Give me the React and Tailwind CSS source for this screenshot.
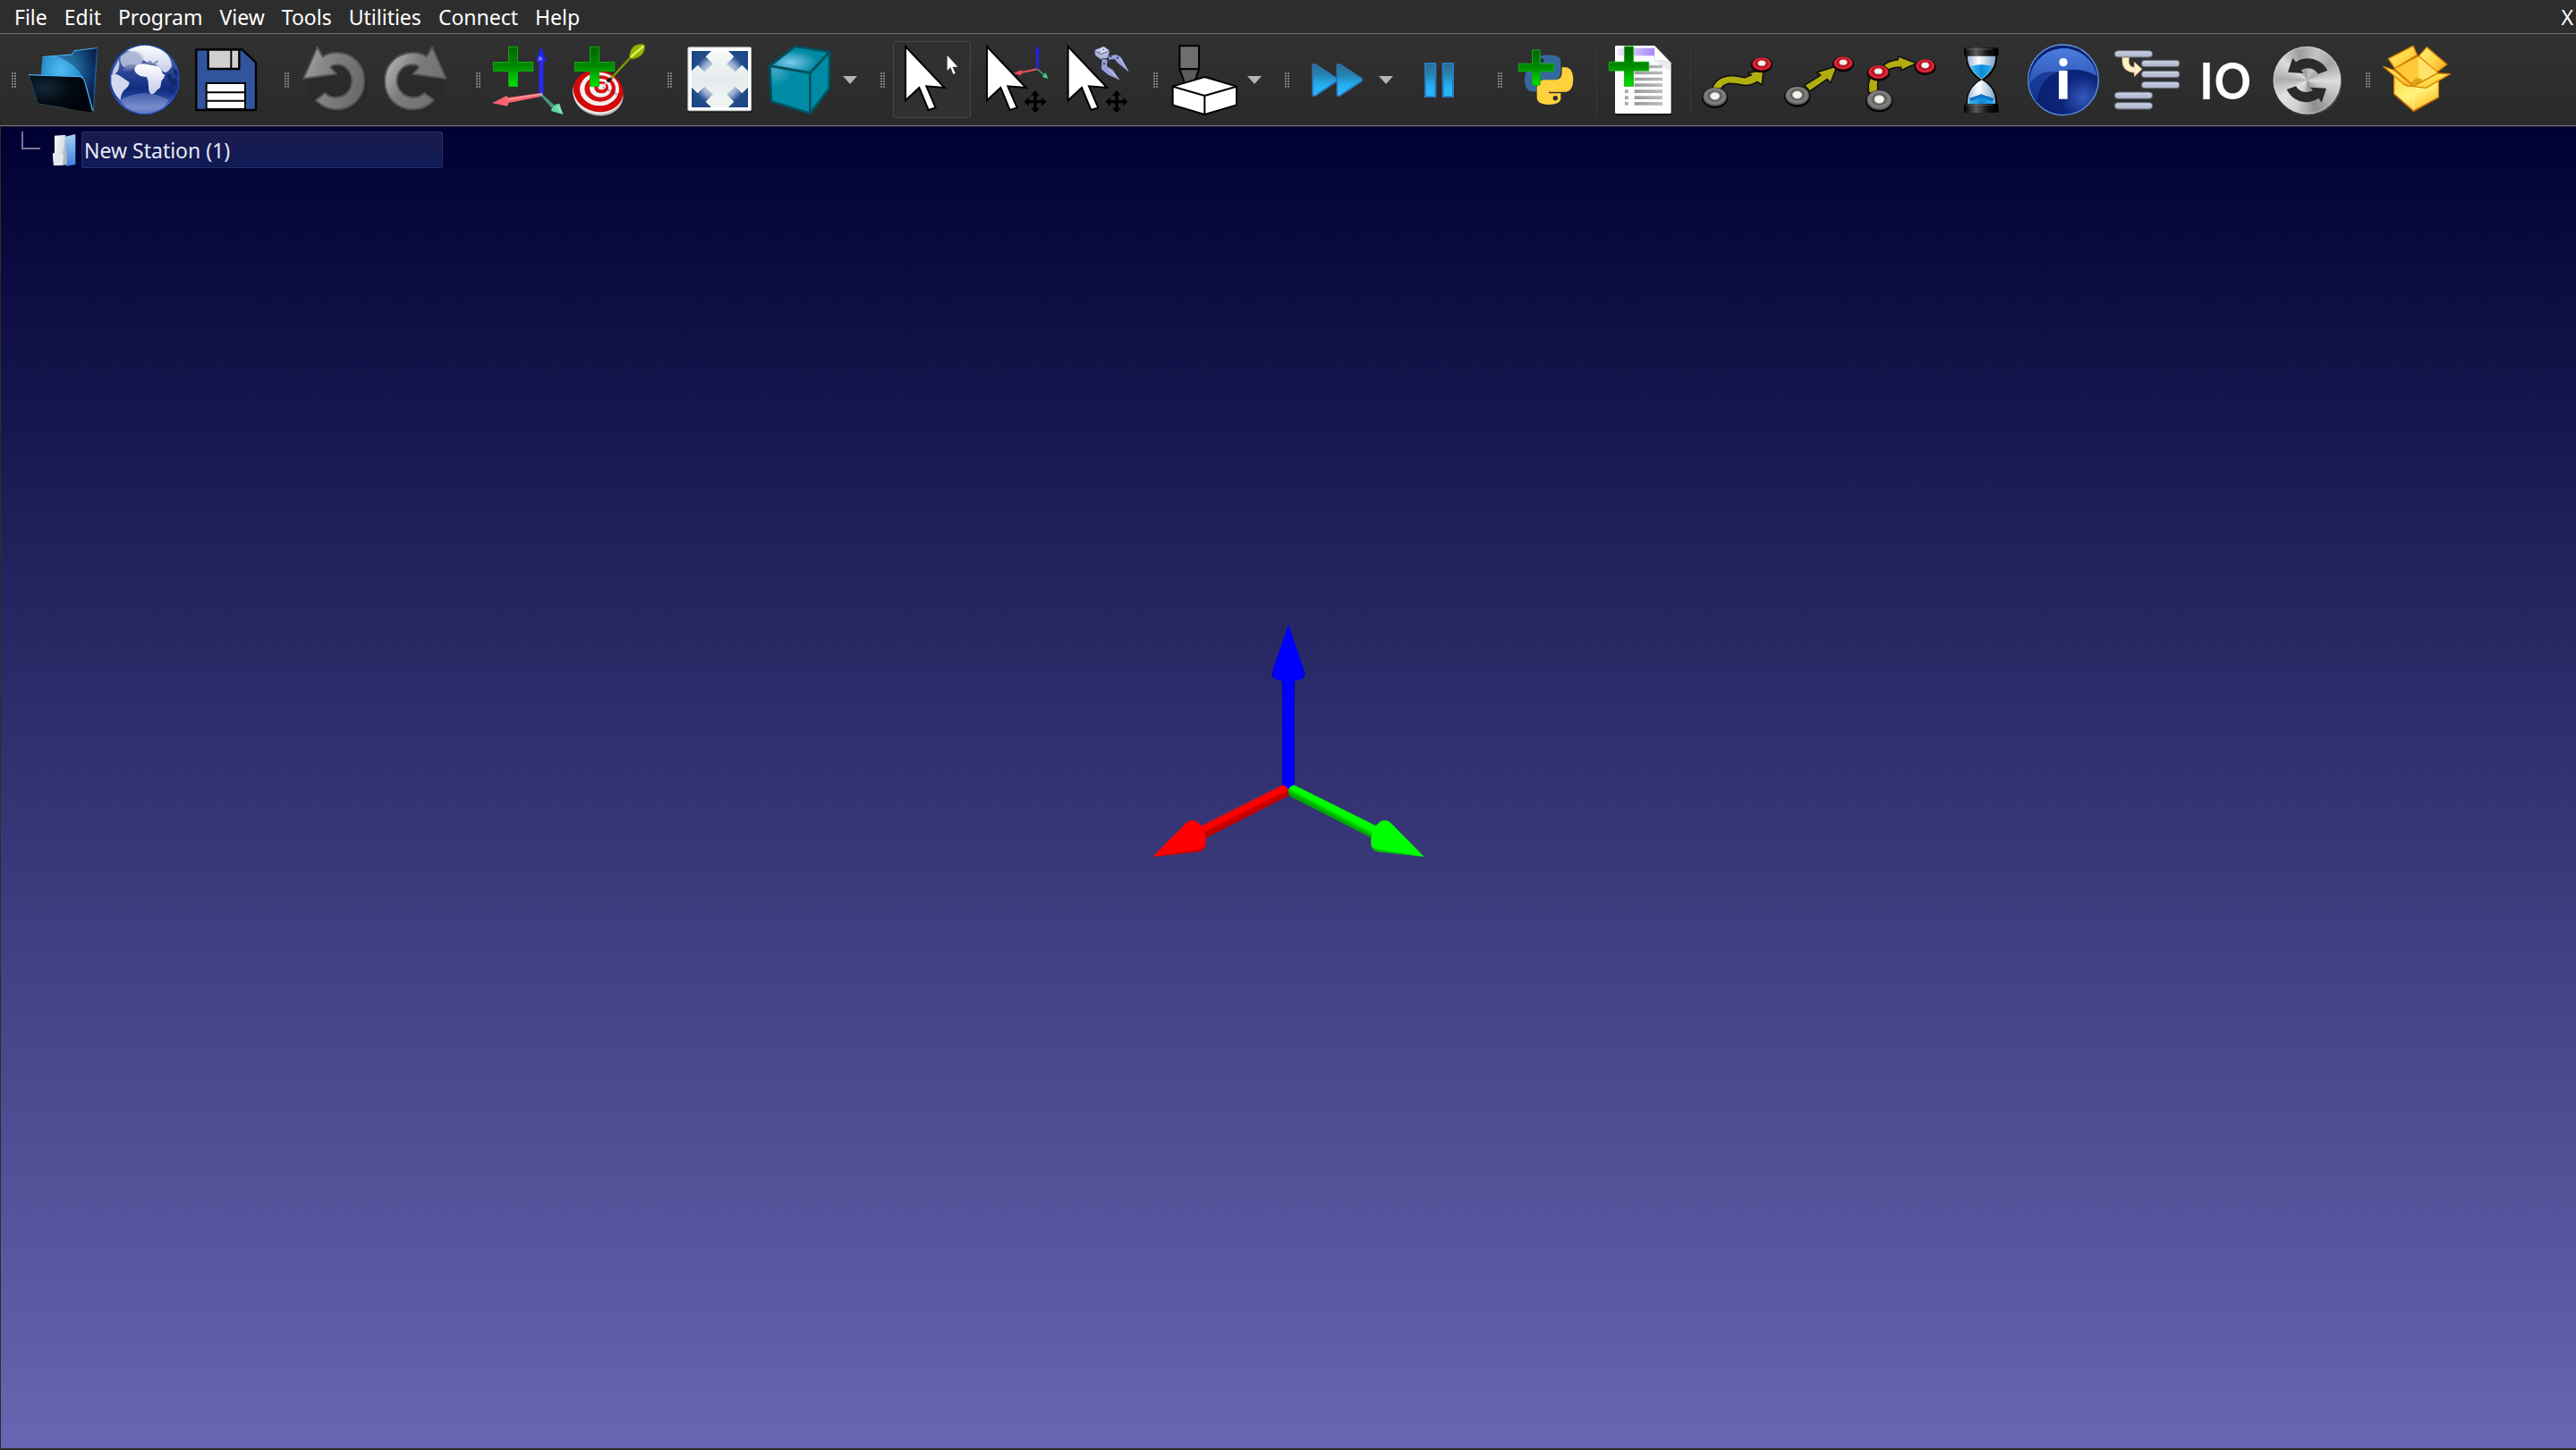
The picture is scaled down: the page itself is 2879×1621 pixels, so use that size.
import React from "react";

const MENUS = ["File", "Edit", "Program", "View", "Tools", "Utilities", "Connect", "Help"];

/* Shared paint definitions for the toolbar artwork. */
function Paints() {
  return (
    <svg className="absolute h-0 w-0" aria-hidden="true">
      <defs>
        <linearGradient id="plus" x1="0" y1="0" x2="0" y2="1">
          <stop offset="0" stopColor="#006400" />
          <stop offset="0.5" stopColor="#008c00" />
          <stop offset="1" stopColor="#00e600" />
        </linearGradient>
        <radialGradient id="folderBack" cx="0.35" cy="0.35" r="0.75">
          <stop offset="0" stopColor="#52bdf2" />
          <stop offset="0.4" stopColor="#2e93d2" />
          <stop offset="0.75" stopColor="#0f3f80" />
          <stop offset="1" stopColor="#06142f" />
        </radialGradient>
        <radialGradient id="folderFront" cx="0.25" cy="0.35" r="0.7">
          <stop offset="0" stopColor="#122a3a" />
          <stop offset="0.6" stopColor="#030a12" />
          <stop offset="1" stopColor="#00040c" />
        </radialGradient>
        <linearGradient id="globeSea" x1="0" y1="0" x2="0" y2="1">
          <stop offset="0" stopColor="#7684b8" />
          <stop offset="0.35" stopColor="#304a9c" />
          <stop offset="0.62" stopColor="#0f2d80" />
          <stop offset="0.72" stopColor="#1b3a92" />
          <stop offset="0.9" stopColor="#6178c2" />
          <stop offset="1" stopColor="#3450a8" />
        </linearGradient>
        <linearGradient id="globeLand" x1="0" y1="0" x2="0" y2="1">
          <stop offset="0" stopColor="#ffffff" />
          <stop offset="1" stopColor="#c6cbea" />
        </linearGradient>
        <linearGradient id="undoFill" x1="0" y1="0" x2="1" y2="0.3">
          <stop offset="0" stopColor="#a6a6a6" />
          <stop offset="0.4" stopColor="#868686" />
          <stop offset="1" stopColor="#6c6c6c" />
        </linearGradient>
        <linearGradient id="redoFill" x1="0" y1="0" x2="1" y2="0.6">
          <stop offset="0" stopColor="#8a8a8a" />
          <stop offset="0.2" stopColor="#a8a8a8" />
          <stop offset="0.5" stopColor="#7c7c7c" />
          <stop offset="1" stopColor="#707070" />
        </linearGradient>
        <radialGradient id="cubeTop" cx="0.35" cy="0.6" r="0.45">
          <stop offset="0" stopColor="#7fc8ee" />
          <stop offset="1" stopColor="#0089a3" />
        </radialGradient>
        <radialGradient id="cubeFront" cx="0.15" cy="0.05" r="0.4">
          <stop offset="0" stopColor="#49a8c8" />
          <stop offset="1" stopColor="#008ca5" />
        </radialGradient>
        <linearGradient id="fitPanel" x1="0" y1="0" x2="0" y2="1">
          <stop offset="0" stopColor="#f7faf9" />
          <stop offset="0.5" stopColor="#e4ebec" />
          <stop offset="1" stopColor="#f4f5f5" />
        </linearGradient>
        <linearGradient id="play" x1="0" y1="0" x2="0" y2="1">
          <stop offset="0" stopColor="#2c6a8a" />
          <stop offset="0.35" stopColor="#2585b4" />
          <stop offset="0.65" stopColor="#24aef2" />
          <stop offset="1" stopColor="#2bbcff" />
        </linearGradient>
        <linearGradient id="purple" x1="0" y1="0" x2="1" y2="0">
          <stop offset="0" stopColor="#efe8ff" />
          <stop offset="1" stopColor="#a986ff" />
        </linearGradient>
        <linearGradient id="docLine" x1="0" y1="0" x2="1" y2="0">
          <stop offset="0" stopColor="#9a9a9a" />
          <stop offset="1" stopColor="#bdbdbd" />
        </linearGradient>
        <radialGradient id="info" cx="0.78" cy="0.75" r="0.8">
          <stop offset="0" stopColor="#3357bd" />
          <stop offset="0.4" stopColor="#0b2478" />
          <stop offset="1" stopColor="#0a2070" />
        </radialGradient>
        <linearGradient id="infoGloss" x1="0" y1="0" x2="0" y2="1">
          <stop offset="0" stopColor="#5487ea" />
          <stop offset="1" stopColor="#1d45a8" />
        </linearGradient>
        <linearGradient id="bar" x1="0" y1="0" x2="0" y2="1">
          <stop offset="0" stopColor="#cdd3e6" />
          <stop offset="1" stopColor="#a9b1c8" />
        </linearGradient>
        <linearGradient id="glassTop" x1="0" y1="0" x2="1" y2="0">
          <stop offset="0" stopColor="#9fb8d8" />
          <stop offset="0.4" stopColor="#ffffff" />
          <stop offset="1" stopColor="#7fa6c8" />
        </linearGradient>
        <linearGradient id="sand" x1="0" y1="0" x2="1" y2="0">
          <stop offset="0" stopColor="#49c4f4" />
          <stop offset="0.5" stopColor="#0c88d8" />
          <stop offset="1" stopColor="#2fb8ee" />
        </linearGradient>
        <linearGradient id="cap" x1="0" y1="0" x2="1" y2="0">
          <stop offset="0" stopColor="#000000" />
          <stop offset="0.35" stopColor="#5a5a5a" />
          <stop offset="0.7" stopColor="#111111" />
          <stop offset="1" stopColor="#000000" />
        </linearGradient>
        <linearGradient id="box" x1="0" y1="0" x2="0.6" y2="1">
          <stop offset="0" stopColor="#ffd43c" />
          <stop offset="0.6" stopColor="#fff27a" />
          <stop offset="1" stopColor="#ffc22e" />
        </linearGradient>
        <linearGradient id="flap" x1="0" y1="0" x2="1" y2="1">
          <stop offset="0" stopColor="#fff07a" />
          <stop offset="0.5" stopColor="#ffd94a" />
          <stop offset="1" stopColor="#ffa51e" />
        </linearGradient>
        <radialGradient id="puckGrey" cx="0.5" cy="0.45" r="0.55">
          <stop offset="0" stopColor="#3f3f3f" />
          <stop offset="0.45" stopColor="#5c5c5c" />
          <stop offset="0.7" stopColor="#858585" />
          <stop offset="1" stopColor="#4c4c4c" />
        </radialGradient>
        <radialGradient id="puckRed" cx="0.5" cy="0.45" r="0.55">
          <stop offset="0" stopColor="#8e0010" />
          <stop offset="0.55" stopColor="#c00a1c" />
          <stop offset="0.75" stopColor="#dc3440" />
          <stop offset="1" stopColor="#a00010" />
        </radialGradient>
        <linearGradient id="stationBlue" x1="0" y1="0" x2="0" y2="1">
          <stop offset="0" stopColor="#a9cff2" />
          <stop offset="1" stopColor="#3a80e0" />
        </linearGradient>
        <linearGradient id="stationWhite" x1="0" y1="0" x2="1" y2="0.4">
          <stop offset="0" stopColor="#ffffff" />
          <stop offset="1" stopColor="#d0d4da" />
        </linearGradient>
      </defs>
    </svg>
  );
}

function Art({ box, children }) {
  return (
    <svg viewBox={box} className="block h-[86px] w-[87px] shrink-0" aria-hidden="true">
      {children}
    </svg>
  );
}

/* Green plus badge: outer corner (x, y), overall size s. */
function Plus({ x, y, s }) {
  const a = s * 0.39;
  const b = s * 0.61;
  return (
    <path
      d={`M${x + a} ${y}H${x + b}V${y + a}H${x + s}V${y + b}H${x + b}V${y + s}H${x + a}V${y + b}H${x}V${y + a}H${x + a}Z`}
      fill="url(#plus)"
      stroke="#12b012"
      strokeWidth="3"
    />
  );
}

const FolderIcon = () => (
  <Art box="81 138 261 258">
    <path d="M137 252L142 194Q143 190 148 190L241 183L249 170L326 160Q328 160 328 164L313 374L285 262Z" fill="url(#folderBack)" />
    <path d="M142 194Q143 190 148 190L241 183L249 170L326 161" fill="none" stroke="#4fb6f0" strokeWidth="3" />
    <path d="M190 188Q250 210 282 262L306 330L322 180L326 162L250 172L242 185Z" fill="#05152e" opacity="0.35" />
    <path d="M200 190Q240 230 250 258M326 162L313 374" fill="none" stroke="#3f9fe0" strokeWidth="2" opacity="0.8" />
    <path d="M97 252L268 258Q279 260 283 272L310 374Q306 378 298 376L134 349Q126 348 123 338Z" fill="url(#folderFront)" />
    <path d="M96 251L268 257Q279 259 284 272L311 372" fill="none" stroke="#48b0e8" strokeWidth="4" />
    <path d="M97 253L124 340Q126 348 134 349L220 363" fill="none" stroke="#24587c" strokeWidth="2" />
  </Art>
);

const GlobeIcon = () => (
  <Art box="354 138 261 258">
    <circle cx="487" cy="270" r="117" fill="#1d1d1d" />
    <circle cx="485" cy="267" r="116" fill="url(#globeSea)" stroke="#1c4fb4" strokeWidth="4" />
    <path d="M424 172Q485 132 548 172Q574 190 576 222Q556 258 540 232Q528 212 500 212Q486 206 480 200Q466 166 424 172Z" fill="url(#globeLand)" />
    <path d="M404 190Q440 158 474 178Q492 196 470 216Q440 238 416 226Q400 214 404 190Z" fill="#cfd3e4" opacity="0.75" />
    <path d="M422 220Q450 212 468 222Q440 244 410 236Z" fill="#5f6ea8" opacity="0.7" />
    <path d="M452 226Q460 214 482 214L530 222Q540 226 546 248L553 250Q552 262 541 272L538 292Q534 300 526 302Q516 318 506 315Q498 308 498 290Q498 270 492 258Q474 260 462 250Q448 240 452 226Z" fill="url(#globeLand)" />
    <path d="M487 214L504 206L512 216L530 205" fill="none" stroke="#7781a2" strokeWidth="5" />
    <path d="M381 232Q390 214 398 200Q404 220 394 240Q382 256 376 246Z" fill="#dfe2f2" opacity="0.85" />
    <path d="M373 252Q384 244 398 252L434 276Q432 292 416 302Q404 316 404 336Q380 316 373 282Z" fill="#e4e7f8" opacity="0.92" />
    <path d="M560 252L572 246L576 264L590 262L594 280L582 288L566 272ZM580 226L594 240L596 256L584 250ZM562 290L574 296L584 314L570 312Z" fill="#102a6a" />
    <path d="M404 336Q485 290 566 336Q536 380 485 382Q434 380 404 336Z" fill="#aab6e6" opacity="0.35" />
  </Art>
);

const SaveIcon = () => (
  <Art box="627 138 261 258">
    <path d="M658 166H812L858 210V369H658Z" fill="#31549c" stroke="#000" strokeWidth="7" strokeLinejoin="round" />
    <path d="M698 167H802V231H698Z" fill="#d0d0d0" stroke="#000" strokeWidth="7" />
    <path d="M775 167V231" stroke="#000" strokeWidth="6" />
    <path d="M692 279H822V366H692Z" fill="#fff" stroke="#000" strokeWidth="6" />
    <path d="M692 310H822M692 338H822" stroke="#000" strokeWidth="6" />
  </Art>
);

const UndoIcon = () => (
  <Art box="96 138 261 258">
    <ellipse cx="236" cy="300" rx="100" ry="80" fill="#282828" opacity="0.5" />
    <path
      d="M164 158L182 190Q202 177 228 177C284 177 321 218 321 270C321 330 278 367 224 367Q184 364 159 336L190 312Q204 327 226 327C258 327 280 302 280 271C280 238 256 217 232 217Q212 217 208 226L228 248L118 263Z"
      fill="url(#undoFill)"
      stroke="#565656"
      strokeWidth="6"
      strokeLinejoin="round"
    />
  </Art>
);

const RedoIcon = () => (
  <Art box="369 138 261 258">
    <ellipse cx="500" cy="300" rx="95" ry="80" fill="#282828" opacity="0.5" />
    <path
      d="M549 158L531 190Q511 177 485 177C429 177 390 218 390 270C390 330 433 367 489 367Q529 364 554 336L523 312Q509 327 487 327C455 327 431 302 431 271C431 238 456 217 481 217Q501 217 505 226L485 248L595 263Z"
      fill="url(#redoFill)"
      stroke="#565656"
      strokeWidth="6"
      strokeLinejoin="round"
    />
  </Art>
);

const FrameIcon = () => (
  <Art box="738 138 261 258">
    <path d="M907 198H922V316H907Z" fill="#2a2af0" />
    <path d="M914 156L932 204Q914 216 897 204Z" fill="#2424e8" />
    <path d="M906 204L910 190L914 204L917 192" fill="none" stroke="#9aa0ff" strokeWidth="3" />
    <path d="M912 312L800 328L802 346L912 324Z" fill="#ff6472" />
    <path d="M750 346L800 320Q808 338 802 356Z" fill="#f86272" />
    <path d="M800 334L910 316" stroke="#ffb0b4" strokeWidth="3" />
    <path d="M920 318L958 352L950 362L914 322Z" fill="#4a9a7c" />
    <path d="M988 384L948 372Q952 348 976 348Z" fill="#62d8a4" />
    <path d="M968 354L984 380" stroke="#c0f4dc" strokeWidth="3" />
    <circle cx="914" cy="317" r="6" fill="#a8a8a8" />
    <Plus x={754} y={157} s={133} />
  </Art>
);

const TargetIcon = () => (
  <Art box="1011 138 261 258">
    <ellipse cx="1106" cy="318" rx="84" ry="70" transform="rotate(12 1106 318)" fill="#b9b9b9" />
    <ellipse cx="1104" cy="312" rx="84" ry="70" transform="rotate(12 1104 312)" fill="#ececec" />
    <ellipse cx="1106" cy="305" rx="84" ry="70" transform="rotate(12 1106 305)" fill="#d40808" />
    <ellipse cx="1110" cy="299" rx="66" ry="56" fill="#f4f0f0" />
    <ellipse cx="1112" cy="297" rx="52" ry="44" fill="#d61010" />
    <ellipse cx="1114" cy="295" rx="37" ry="31" fill="#f6f2f2" />
    <ellipse cx="1116" cy="293" rx="24" ry="20" fill="#d61414" />
    <ellipse cx="1118" cy="291" rx="13" ry="10" fill="#f8f0f0" />
    <path d="M1120 290L1150 262" stroke="#e8e8e8" strokeWidth="4" />
    <path d="M1120 292L1176 320" stroke="#5a2020" strokeWidth="6" opacity="0.35" />
    <path d="M1136 274L1152 260" stroke="#111" strokeWidth="10" />
    <path d="M1148 264L1222 184" stroke="#7d9a00" strokeWidth="7" />
    <path d="M1210 196Q1212 150 1246 148Q1262 146 1262 158Q1260 190 1222 198Z" fill="#98b400" stroke="#5d7400" strokeWidth="2" />
    <path d="M1214 192L1258 154" stroke="#dcf060" strokeWidth="7" />
    <Plus x={1027} y={157} s={133} />
  </Art>
);

const FitIcon = () => (
  <Art box="90 48 261 258">
    <defs>
      <radialGradient id="fitCorner" gradientUnits="userSpaceOnUse" cx="223" cy="175" r="132">
        <stop offset="0.3" stopColor="#e4ebec" />
        <stop offset="0.52" stopColor="#8fa6cc" />
        <stop offset="0.68" stopColor="#234c8c" />
        <stop offset="1" stopColor="#1b4484" />
      </radialGradient>
    </defs>
    <rect x="116" y="70" width="214" height="218" rx="6" fill="#1c1c1c" />
    <rect x="115" y="67" width="215" height="216" rx="6" fill="#b8b8b8" />
    <rect x="118" y="70" width="209" height="210" rx="4" fill="#fff" />
    <rect x="129" y="81" width="189" height="189" fill="url(#fitPanel)" />
    <path
      d="M129 81H195L176 100L201 125L172 151L149 128L129 148ZM318 81H252L271 100L246 125L275 151L298 128L318 148ZM129 270H195L176 251L201 226L172 200L149 223L129 203ZM318 270H252L271 251L246 226L275 200L298 223L318 203Z"
      fill="url(#fitCorner)"
    />
  </Art>
);

const CubeIcon = () => (
  <Art box="363 48 261 258">
    <g stroke="#00525f" strokeWidth="8" strokeLinejoin="round">
      <path d="M391 131L475 66L592 84L526 155Z" fill="url(#cubeTop)" />
      <path d="M391 131L526 155V290L396 250Z" fill="url(#cubeFront)" />
      <path d="M526 155L592 84L590 208L526 290Z" fill="#008aa3" />
    </g>
  </Art>
);

const ARROW = "M0 0V181L46 138L77 213L101 205L70 133L131 138Z";

const BigArrow = ({ x }) => (
  <path
    d={ARROW}
    transform={`translate(${x} 66)`}
    fill="#fff"
    stroke="#000"
    strokeWidth="6"
    strokeLinejoin="miter"
  />
);

const MoveCross = ({ x }) => (
  <path
    transform={`translate(${x} 251)`}
    fill="#000"
    d="M0 -38L15 -21H5V-5H21V-15L38 0L21 15V5H5V21H15L0 38L-15 21H-5V5H-21V15L-38 0L-21 -15V-5H-5V-21H-15Z"
  />
);

const SelectIcon = () => (
  <Art box="84 48 261 258">
    <BigArrow x={126} />
    <path d="M266 96V147L277 136L286 159L293 156L284 134L301 134Z" fill="#fff" />
  </Art>
);

const MoveFrameIcon = () => (
  <Art box="357 48 261 258">
    <path d="M564 84H573V140H564Z" fill="#2424e0" />
    <path d="M568 62L577 88H560Z" fill="#2020f0" />
    <path d="M568 142L514 153" stroke="#f0505c" strokeWidth="6" />
    <path d="M488 156L516 144L514 163Z" fill="#ff4a58" />
    <path d="M570 143L592 163" stroke="#3c9c70" strokeWidth="5" />
    <path d="M604 174L585 168L596 154Z" fill="#4fd08c" />
    <BigArrow x={399} />
    <MoveCross x={561} />
  </Art>
);

const MoveToolIcon = () => (
  <Art box="630 48 261 258">
    <BigArrow x={671} />
    <g stroke="#33375a" strokeWidth="2" strokeLinejoin="round">
      <path d="M759 78L791 65L811 80L806 104L782 110L762 96Z" fill="#b4b8dc" />
      <path d="M759 78L791 65L811 80L780 92Z" fill="#d0d3ee" />
      <path d="M806 98L832 92L850 102L874 151L838 122L826 108L808 112Z" fill="#9aa2dc" />
      <path d="M784 106L804 110L802 132L822 144L845 179L806 162L782 142Z" fill="#98a0d8" />
      <path d="M848 108L872 148M806 140L842 176" stroke="#cdd2f6" strokeWidth="3" />
    </g>
    <g fill="#23264a">
      <circle cx="776" cy="84" r="2" />
      <circle cx="790" cy="76" r="2" />
      <circle cx="814" cy="100" r="3" />
      <circle cx="792" cy="124" r="3" />
      <circle cx="836" cy="104" r="3" />
    </g>
    <MoveCross x={834} />
  </Art>
);

const MachineIcon = () => (
  <Art box="69 48 261 258">
    <g stroke="#000" strokeWidth="6" strokeLinejoin="round">
      <path d="M115 64H180V142H115Z" fill="#6e6e6e" />
      <path d="M115 142H180L162 194H134Z" fill="#5c5c5c" />
      <path d="M199 168L306 200V262L199 294L92 262V200Z" fill="#fff" />
      <path d="M92 200L199 231L306 200M199 231V294" fill="none" />
    </g>
  </Art>
);

const FastIcon = () => (
  <Art box="510 48 261 258">
    <g fill="url(#play)" stroke="#2f74b8" strokeWidth="5" strokeLinejoin="round">
      <path d="M561 132Q561 123 570 126L641 172Q648 178 641 183L570 231Q561 234 561 225Z" />
      <path d="M643 132Q643 123 652 126L724 172Q730 178 724 183L652 231Q643 234 643 225Z" />
    </g>
  </Art>
);

const PauseIcon = () => (
  <Art box="855 48 261 258">
    <g fill="url(#play)" stroke="#2a7cc0" strokeWidth="6">
      <path d="M939 123H973V234H939ZM998 123H1032V234H998Z" />
    </g>
  </Art>
);

const PythonIcon = () => (
  <Art box="84 48 261 258">
    <path
      d="M173 119V112Q173 95 213 94Q252 95 253 114V152Q253 177 230 178H192Q172 179 172 202V217H158Q133 216 132 176Q133 136 160 135H213V129H173Z"
      fill="#34699c"
    />
    <path
      d="M253 236V242Q251 260 213 261Q175 260 173 240V204Q174 179 196 178H236Q257 176 257 154V136H270Q294 138 295 178Q293 217 270 218H213V223H253Z"
      fill="#ffd13c"
    />
    <circle cx="190" cy="113" r="7" fill="#2d2d2d" />
    <circle cx="235" cy="239" r="8" fill="#2d2d2d" />
    <Plus x={112} y={78} s={117} />
  </Art>
);

const ProgramIcon = () => (
  <Art box="399 48 261 258">
    <path d="M437 68Q437 66 441 66H568L625 124V297H437Z" fill="#161616" />
    <path d="M435 66Q435 63 439 63H566L623 121V287Q623 291 619 291H439Q435 291 435 287Z" fill="#fdfdfd" />
    <path d="M443 71H567V97H443Z" fill="url(#purple)" />
    <path d="M568 64L622 121Q590 106 568 116Z" fill="#fff" stroke="#d8d8d8" strokeWidth="2" />
    <path d="M568 116Q590 106 622 121V150Z" fill="#dcdcdc" opacity="0.5" />
    <g fill="url(#docLine)">
      <path d="M500 128H594V139H500ZM500 149H594V160H500ZM500 170H594V181H500ZM500 190H594V201H500ZM500 211H594V222H500ZM500 232H594V243H500ZM500 252H594V263H500Z" />
      <path d="M468 211H480V222H468ZM468 232H480V243H468ZM468 252H480V263H468Z" />
    </g>
    <Plus x={415} y={66} s={133} />
  </Art>
);

const Puck = ({ x, y, rx, ry, paint }) => (
  <g>
    <ellipse cx={x} cy={y + 3} rx={rx + 2} ry={ry + 2} fill="#050505" />
    <ellipse cx={x} cy={y} rx={rx - 2} ry={ry - 2} fill={paint} />
    <ellipse cx={x} cy={y - 3} rx={rx * 0.38} ry={ry * 0.38} fill="#f4f2ea" stroke="#b8b0a8" strokeWidth="2" />
  </g>
);

const MoveJIcon = () => (
  <Art box="54 48 261 258">
    <path
      d="M101 204Q116 166 164 163Q184 164 210 170L232 161L221 155L273 143L268 195L252 184Q230 198 206 196Q180 190 158 190Q138 194 132 206L120 214Z"
      fill="#b2ae10"
      stroke="#111"
      strokeWidth="5"
      strokeLinejoin="round"
    />
    <Puck x={267} y={125} rx={34} ry={24} paint="url(#puckRed)" />
    <Puck x={110} y={235} rx={42} ry={33} paint="url(#puckGrey)" />
  </Art>
);

const MoveLIcon = () => (
  <Art box="327 48 261 258">
    <path
      d="M410 196L464 162L450 153L520 131L498 188L486 176L428 216Z"
      fill="#b2ae10"
      stroke="#111"
      strokeWidth="5"
      strokeLinejoin="round"
    />
    <Puck x={540} y={122} rx={34} ry={24} paint="url(#puckRed)" />
    <Puck x={386} y={231} rx={42} ry={33} paint="url(#puckGrey)" />
  </Art>
);

const MoveCIcon = () => (
  <Art box="600 48 261 258">
    <g fill="#b2ae10" stroke="#111" strokeWidth="5" strokeLinejoin="round">
      <path d="M626 222Q620 190 632 168H658Q654 196 656 220Z" />
      <path d="M674 130Q694 112 724 110V98L786 122L734 146V136Q708 134 692 144Z" />
    </g>
    <Puck x={815} y={132} rx={34} ry={25} paint="url(#puckRed)" />
    <Puck x={658} y={152} rx={36} ry={25} paint="url(#puckRed)" />
    <Puck x={661} y={246} rx={44} ry={35} paint="url(#puckGrey)" />
  </Art>
);

const HourglassIcon = () => (
  <Art box="3 48 261 258">
    <path d="M82 92H186Q190 150 142 178Q190 206 186 266H82Q80 206 128 178Q80 150 82 92Z" fill="#060606" />
    <path d="M87 96H180Q184 142 134 176Q84 142 87 96Z" fill="url(#glassTop)" />
    <path d="M96 132Q132 122 172 132Q164 154 134 174Q104 154 96 132Z" fill="url(#sand)" />
    <path d="M134 178Q184 206 180 262H87Q84 206 134 178Z" fill="url(#glassTop)" />
    <path d="M134 226L174 246L179 262H88L93 246Z" fill="url(#sand)" />
    <path d="M132 226L176 240L170 250L132 236L98 250L92 240Z" fill="#1176c8" />
    <rect x="75" y="70" width="116" height="28" rx="5" fill="url(#cap)" />
    <rect x="75" y="258" width="116" height="30" rx="5" fill="url(#cap)" />
    <path d="M84 75H172M84 262H172" stroke="#7a7a7a" strokeWidth="3" opacity="0.6" />
  </Art>
);

const InfoIcon = () => (
  <Art box="276 48 261 258">
    <circle cx="408" cy="178" r="118" fill="url(#info)" stroke="#6296e0" strokeWidth="4" />
    <path d="M294 190A115 115 0 0 1 522 166Q470 132 400 148Q330 164 318 252Q296 226 294 190Z" fill="url(#infoGloss)" opacity="0.9" />
    <path d="M318 254Q326 176 388 152Q330 140 294 190Q298 228 318 254Z" fill="#0f2f8a" opacity="0.7" />
    <circle cx="408" cy="119" r="14" fill="#fff" />
    <rect x="393" y="147" width="29" height="95" fill="#fff" />
  </Art>
);

const IndentIcon = () => (
  <Art box="549 48 261 258">
    <g fill="url(#bar)" stroke="#5e6472" strokeWidth="3">
      <rect x="580" y="80" width="127" height="22" rx="11" />
      <rect x="670" y="112" width="128" height="22" rx="11" />
      <rect x="670" y="148" width="128" height="22" rx="11" />
      <rect x="670" y="184" width="128" height="22" rx="11" />
      <rect x="580" y="219" width="127" height="22" rx="11" />
      <rect x="580" y="254" width="127" height="22" rx="11" />
    </g>
    <path d="M606 103H628V120Q630 134 646 136V118L672 142L646 167V154Q608 150 606 118Z" fill="#fff0c8" stroke="#e0b868" strokeWidth="2" />
  </Art>
);

const SyncIcon = () => (
  <Art box="165 138 261 258">
    <circle cx="298" cy="272" r="114" fill="#5a5a5a" />
    <foreignObject x="182" y="156" width="226" height="226">
      <div className="h-full w-full rounded-full bg-[conic-gradient(from_20deg,#c4c4c4,#a4a4a4_10%,#dedede_20%,#b4b4b4_30%,#8e8e8e_40%,#cfcfcf_50%,#e2e2e2_60%,#adadad_70%,#dcdcdc_80%,#9c9c9c_90%,#c4c4c4)]" />
    </foreignObject>
    <circle cx="295" cy="269" r="112" fill="none" stroke="#dcdcdc" strokeWidth="2" />
    <g fill="#2b2b2b">
      <path d="M247 194L258 208Q284 190 316 198Q350 208 364 236L332 248Q322 230 298 229Q282 230 276 236L284 246L231 242Z" />
      <path d="M344 344L334 330Q304 348 272 340Q240 328 227 300L258 289Q268 308 292 309Q308 308 314 302L306 293L360 296Z" />
    </g>
  </Art>
);

const PackageIcon = () => (
  <Art box="534 138 261 258">
    <g stroke="#d98200" strokeWidth="4" strokeLinejoin="round">
      <path d="M568 197L651 154L664 184L590 230Z" fill="url(#flap)" />
      <path d="M670 188L697 158L764 216L730 242Z" fill="url(#flap)" />
      <path d="M588 230L668 188L732 244L653 288Z" fill="#ffc93a" />
      <path d="M668 190V262L653 286L732 244Z" fill="#ffe36a" stroke="none" />
      <path d="M640 282L660 262L680 264L672 284Z" fill="#e0a010" stroke="none" />
      <path d="M587 244L653 288L736 254V327L652 373L587 316Z" fill="url(#box)" />
      <path d="M551 223L588 236L652 288Q640 292 622 284Z" fill="url(#flap)" />
      <path d="M652 290L732 246L775 248L694 295Z" fill="url(#flap)" />
    </g>
    <path d="M652 292V370" stroke="#ffe9a0" strokeWidth="3" />
    <path d="M587 316L652 373L736 327" fill="none" stroke="#b85c00" strokeWidth="4" />
  </Art>
);

const IoIcon = () => (
  <span className="flex h-[86px] w-[87px] items-center justify-center pt-1 font-['Inter','Liberation_Sans',sans-serif] text-[56px] leading-none font-semibold text-white">
    IO
  </span>
);

function Grip() {
  return (
    <svg viewBox="0 0 5 17" className="mr-[9px] block h-[17px] w-[5px] shrink-0" aria-hidden="true">
      <path
        fill="#7d7d7d"
        d="M0 0h2v2H0zM3 0h2v2H3zM0 3h2v2H0zM3 3h2v2H3zM0 6h2v2H0zM3 6h2v2H3zM0 9h2v2H0zM3 9h2v2H3zM0 12h2v2H0zM3 12h2v2H3zM0 15h2v2H0zM3 15h2v2H3z"
      />
    </svg>
  );
}

const Divider = () => (
  <span className="flex h-20 w-[10px] shrink-0 justify-center">
    <span className="w-px bg-[#383838]" />
  </span>
);

function Tool({ label, icon: Icon, active, menu }) {
  return (
    <div className="flex shrink-0 items-center">
      <button
        type="button"
        aria-label={label}
        aria-pressed={active}
        className={
          active
            ? "rounded-[3px] bg-[#303030] outline outline-1 -outline-offset-1 outline-[#484848]"
            : "rounded-[3px]"
        }
      >
        <Icon />
      </button>
      {menu && (
        <button type="button" aria-label={`${label} options`} className="flex h-[86px] w-6 items-center justify-center">
          <svg viewBox="0 0 16 9" className="h-[9px] w-4" aria-hidden="true">
            <path d="M0 0H16L8 9Z" fill="#b4b4b4" />
          </svg>
        </button>
      )}
    </div>
  );
}

const GROUPS = [
  [
    { label: "Open", icon: FolderIcon },
    { label: "Open online library", icon: GlobeIcon },
    { label: "Save station", icon: SaveIcon },
  ],
  [
    { label: "Undo", icon: UndoIcon },
    { label: "Redo", icon: RedoIcon },
  ],
  [
    { label: "Add reference frame", icon: FrameIcon },
    { label: "Add target", icon: TargetIcon },
  ],
  [
    { label: "Fit all", icon: FitIcon },
    { label: "Isometric view", icon: CubeIcon, menu: true },
  ],
  [
    { label: "Select", icon: SelectIcon, active: true },
    { label: "Move reference", icon: MoveFrameIcon },
    { label: "Move tool", icon: MoveToolIcon },
  ],
  [{ label: "Machining", icon: MachineIcon, menu: true }],
  [
    { label: "Fast simulation", icon: FastIcon, menu: true },
    { label: "Pause", icon: PauseIcon },
  ],
  [
    { label: "Add Python program", icon: PythonIcon },
    null,
    { label: "Add program", icon: ProgramIcon },
    null,
    { label: "Joint move", icon: MoveJIcon },
    { label: "Linear move", icon: MoveLIcon },
    { label: "Circular move", icon: MoveCIcon },
    { label: "Pause instruction", icon: HourglassIcon },
    { label: "Show message", icon: InfoIcon },
    { label: "Program call", icon: IndentIcon },
    { label: "Set or wait I/O", icon: IoIcon },
    { label: "Simulation event", icon: SyncIcon },
  ],
  [{ label: "Export package", icon: PackageIcon }],
];

function Axes() {
  return (
    <svg viewBox="0 0 1020 1200" className="block h-[400px] w-[340px]" aria-label="World axes" role="img">
      <defs>
        <linearGradient id="axisBlue" x1="0" y1="0" x2="1" y2="0">
          <stop offset="0" stopColor="#0000c0" />
          <stop offset="0.12" stopColor="#0000ff" />
          <stop offset="0.88" stopColor="#0000ff" />
          <stop offset="1" stopColor="#0000c0" />
        </linearGradient>
        <linearGradient id="axisRed" gradientUnits="userSpaceOnUse" x1="350" y1="648" x2="368" y2="684">
          <stop offset="0" stopColor="#e00000" />
          <stop offset="0.2" stopColor="#ff0000" />
          <stop offset="0.75" stopColor="#ff0000" />
          <stop offset="1" stopColor="#c00000" />
        </linearGradient>
        <linearGradient id="axisGreen" gradientUnits="userSpaceOnUse" x1="680" y1="655" x2="660" y2="693">
          <stop offset="0" stopColor="#00e400" />
          <stop offset="0.2" stopColor="#00ff00" />
          <stop offset="0.65" stopColor="#00ff00" />
          <stop offset="1" stopColor="#00a800" />
        </linearGradient>
      </defs>
      <path d="M489 230H531V590L510 603L489 590Z" fill="url(#axisBlue)" />
      <path d="M510 51L565 212Q567 226 560 231Q540 243 510 243Q480 243 460 231Q453 226 455 212Z" fill="url(#axisBlue)" />
      <path d="M490 590Q504 592 510 606V626L232 768L212 730Z" fill="url(#axisRed)" />
      <path d="M55 830L166 718Q180 704 198 710Q216 718 230 752Q238 788 228 802Q222 812 205 814Z" fill="#ff0000" />
      <path d="M55 830L205 814Q222 812 230 797L205 806Z" fill="#c80000" />
      <path d="M530 590Q514 592 510 606Q508 620 516 628L790 768L810 730Z" fill="url(#axisGreen)" />
      <path d="M965 830L854 718Q840 704 822 710Q804 718 790 752Q782 788 792 802Q798 812 815 814Z" fill="#00ff00" />
      <path d="M965 830L815 814Q798 812 790 797L815 806Z" fill="#00c400" />
    </svg>
  );
}

function StationTree() {
  return (
    <ul className="flex flex-col pt-[5px] pl-[23px]">
      <li className="flex h-[41px] items-center">
        <span className="h-5 w-[21px] shrink-0 self-start border-b-2 border-l-2 border-[#74748f]" />
        <svg viewBox="178 441 81 123" className="ml-[13px] block h-[41px] w-[27px] shrink-0" aria-hidden="true">
          <path d="M222 458L257 450V552L226 557Z" fill="url(#stationBlue)" />
          <path d="M187 455L224 452L222 500L227 514V552L184 555L181 516L187 512Z" fill="url(#stationWhite)" />
          <path d="M222 458L227 514V552L214 554L216 506L220 496Z" fill="#b4bac4" />
          <path d="M187 512L181 516L184 555L214 554L216 520Z" fill="#e6e8ec" />
        </svg>
        <button
          type="button"
          className="ml-[6px] flex h-[41px] w-[404px] items-center rounded-[2px] border border-[#24306a] bg-linear-to-b/srgb from-[#1a1b4c] to-[#0f1a55] pt-[2px] pl-[2px] text-[23px] text-[#e9e9f6]"
        >
          New Station (1)
        </button>
      </li>
    </ul>
  );
}

export default function App() {
  return (
    <div className="flex min-h-screen flex-col bg-[#2d2d2d] font-['Noto_Sans','Segoe_UI',sans-serif] text-white">
      <Paints />
      <header>
        <nav className="flex h-[38px] items-center justify-between border-b border-[#6e6e6e] pr-[3px] pl-[7px] text-[23px] leading-[30px]">
          <div className="flex gap-px">
            {MENUS.map((name) => (
              <button key={name} type="button" className="px-[9px]">
                {name}
              </button>
            ))}
          </div>
          <button type="button" aria-label="Close">
            X
          </button>
        </nav>
        <div
          role="toolbar"
          aria-label="Main toolbar"
          className="flex items-center gap-[22px] border-b border-[#747474] bg-linear-to-b/srgb from-[#313131] to-[#2a2a2a] py-2 pl-[13px]"
        >
          {GROUPS.map((group, g) => (
            <div key={g} className="flex shrink-0 items-center">
              <Grip />
              <div className="flex items-center gap-1">
                {group.map((tool, i) => (tool ? <Tool key={tool.label} {...tool} /> : <Divider key={i} />))}
              </div>
            </div>
          ))}
        </div>
      </header>
      <main className="grid flex-1 border-t border-b-2 border-l border-t-[#1c1c30] border-b-[#2d2d2d] border-l-[#2d2d2d] bg-linear-to-b/srgb from-[#000033] to-[#6666b2]">
        <div className="flex items-center justify-center [grid-area:1/1]">
          <Axes />
        </div>
        <div className="[grid-area:1/1]">
          <StationTree />
        </div>
      </main>
    </div>
  );
}
